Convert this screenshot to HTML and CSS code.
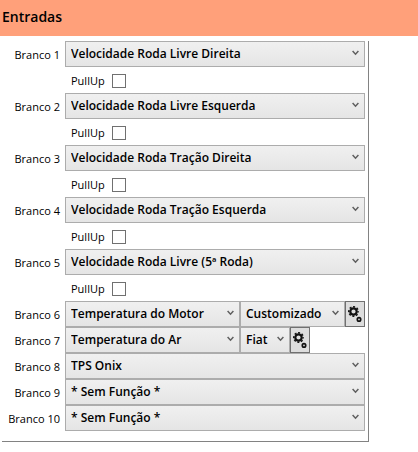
FILE: index.html
```
<!DOCTYPE html>
<html lang="pt-BR">
  <head>
    <meta charset="utf-8">
    <title>Entradas</title>
    <meta name="viewport" content="width=device-width, initial-scale=1">
    <link rel="stylesheet" href="styles.css">
  </head>
  <body>
    <svg class="symbols" aria-hidden="true">
      <symbol id="arrow" viewBox="0 0 7 6">
        <path d="M.6 1 3.5 4.2 6.4 1" fill="none" stroke="#606060" stroke-width="1.5"/>
      </symbol>
      <symbol id="gears" viewBox="0 0 14 16">
        <circle cx="5.5" cy="5.5" r="3.2" fill="none" stroke="#111" stroke-width="2.2"/>
        <circle cx="5.5" cy="5.5" r="4.7" fill="none" stroke="#111" stroke-width="1.6" stroke-dasharray="2 1.691" stroke-dashoffset="1"/>
        <circle cx="11" cy="13.4" r="1.7" fill="none" stroke="#111" stroke-width="1.7"/>
      </symbol>
    </svg>
    <h1 class="title">Entradas</h1>
    <form class="inputs">
      <label class="name" for="in1">Branco 1</label>
      <div class="field">
        <span class="combo"><select id="in1"><option>Velocidade Roda Livre Direita</option></select><svg class="arrow"><use href="#arrow"/></svg></span>
      </div>
      <label class="pullup">PullUp <input type="checkbox" name="pullup1"></label>

      <label class="name" for="in2">Branco 2</label>
      <div class="field">
        <span class="combo"><select id="in2"><option>Velocidade Roda Livre Esquerda</option></select><svg class="arrow"><use href="#arrow"/></svg></span>
      </div>
      <label class="pullup">PullUp <input type="checkbox" name="pullup2"></label>

      <label class="name" for="in3">Branco 3</label>
      <div class="field">
        <span class="combo"><select id="in3"><option>Velocidade Roda Tração Direita</option></select><svg class="arrow"><use href="#arrow"/></svg></span>
      </div>
      <label class="pullup">PullUp <input type="checkbox" name="pullup3"></label>

      <label class="name" for="in4">Branco 4</label>
      <div class="field">
        <span class="combo"><select id="in4"><option>Velocidade Roda Tração Esquerda</option></select><svg class="arrow"><use href="#arrow"/></svg></span>
      </div>
      <label class="pullup">PullUp <input type="checkbox" name="pullup4"></label>

      <label class="name" for="in5">Branco 5</label>
      <div class="field">
        <span class="combo"><select id="in5"><option>Velocidade Roda Livre (5ª Roda)</option></select><svg class="arrow"><use href="#arrow"/></svg></span>
      </div>
      <label class="pullup">PullUp <input type="checkbox" name="pullup5"></label>

      <label class="name" for="in6">Branco 6</label>
      <div class="field">
        <span class="combo sensor"><select id="in6"><option>Temperatura do Motor</option></select><svg class="arrow"><use href="#arrow"/></svg></span>
        <span class="combo custom"><select aria-label="Curva Branco 6"><option>Customizado</option></select><svg class="arrow"><use href="#arrow"/></svg></span>
        <button class="config" type="button" aria-label="Configurar Branco 6"><svg><use href="#gears"/></svg></button>
      </div>

      <label class="name" for="in7">Branco 7</label>
      <div class="field">
        <span class="combo sensor"><select id="in7"><option>Temperatura do Ar</option></select><svg class="arrow"><use href="#arrow"/></svg></span>
        <span class="combo brand"><select aria-label="Curva Branco 7"><option>Fiat</option></select><svg class="arrow"><use href="#arrow"/></svg></span>
        <button class="config" type="button" aria-label="Configurar Branco 7"><svg><use href="#gears"/></svg></button>
      </div>

      <label class="name" for="in8">Branco 8</label>
      <div class="field">
        <span class="combo"><select id="in8"><option>TPS Onix</option></select><svg class="arrow"><use href="#arrow"/></svg></span>
      </div>

      <label class="name" for="in9">Branco 9</label>
      <div class="field">
        <span class="combo"><select id="in9"><option>* Sem Função *</option></select><svg class="arrow"><use href="#arrow"/></svg></span>
      </div>

      <label class="name" for="in10">Branco 10</label>
      <div class="field">
        <span class="combo"><select id="in10"><option>* Sem Função *</option></select><svg class="arrow"><use href="#arrow"/></svg></span>
      </div>
    </form>
  </body>
</html>
```
FILE: styles.css
```
body {
  margin: 0;
  background: white;
  color: black;
  font: 11px/16px "Segoe UI", "Open Sans", "Noto Sans", sans-serif;
}
.symbols {
  display: none;
}
.title {
  margin: 0;
  padding: 7px 2px 9px;
  background: lightsalmon;
  font-size: 14px;
  line-height: 20px;
  font-weight: 600;
}
.inputs {
  display: grid;
  grid-template-columns: 58px 1fr;
  grid-auto-rows: 26px;
  column-gap: 5px;
  margin: 5px 49px 10px 2px;
  padding: 0 4px 10px 0;
  border-right: 1px solid #828282;
  border-bottom: 1px solid #828282;
}
.name {
  padding-top: 6px;
  text-align: right;
  white-space: nowrap;
}
.field {
  display: flex;
}
.combo {
  display: grid;
  flex: 1;
}
.combo.sensor {
  flex: 0 0 175px;
}
.combo.custom {
  flex: 0 0 105px;
}
.combo.brand {
  flex: 0 0 50px;
}
.combo select {
  grid-area: 1 / 1;
  width: 100%;
  min-width: 0;
  height: 26px;
  margin: 0;
  padding: 0 0 0 5px;
  appearance: none;
  border: 1px solid #acacac;
  border-radius: 0;
  background: linear-gradient(#f0f0f0, #e5e5e5);
  color: black;
  font: 600 12px/20px "Segoe UI", "Open Sans", "Noto Sans", sans-serif;
}
.arrow {
  grid-area: 1 / 1;
  place-self: center end;
  width: 7px;
  height: 6px;
  margin: 0 6px 2px 0;
  pointer-events: none;
}
.config {
  display: flex;
  align-items: center;
  justify-content: center;
  width: 20px;
  height: 26px;
  padding: 0;
  border: 1px solid #707070;
  background: #ddd;
}
.config svg {
  width: 14px;
  height: 16px;
}
.pullup {
  grid-column: 2;
  display: flex;
  align-items: center;
  gap: 7px;
  padding: 2px 0 0 6px;
}
.pullup input {
  appearance: none;
  width: 14px;
  height: 14px;
  margin: 0;
  border: 1px solid #707070;
  background: white;
}
.pullup input:checked {
  background: #707070;
}
```
